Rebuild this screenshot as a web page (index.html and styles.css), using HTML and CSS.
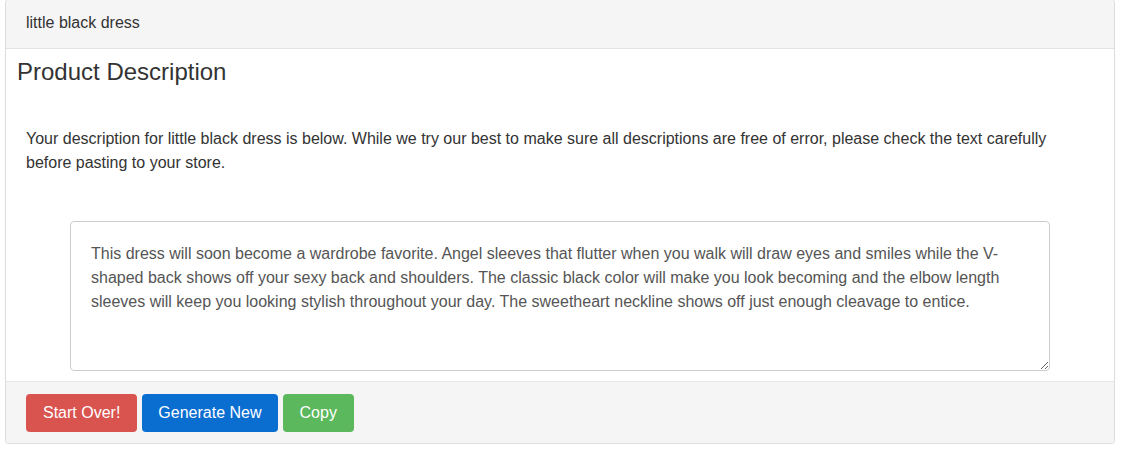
FILE: index.html
```html
<!DOCTYPE html>
<html>
<head>
<meta charset="utf-8">
<link rel="stylesheet" href="styles.css">
</head>
<body>
<div class="panel">
  <div class="panel-heading">little black dress</div>
  <div class="panel-body">
    <h3 class="title">Product Description</h3>
    <p class="intro">Your description for little black dress is below. While we try our best to make sure all descriptions are free of error, please check the text carefully before pasting to your store.</p>
    <textarea class="desc">This dress will soon become a wardrobe favorite. Angel sleeves that flutter when you walk will draw eyes and smiles while the V-shaped back shows off your sexy back and shoulders. The classic black color will make you look becoming and the elbow length sleeves will keep you looking stylish throughout your day. The sweetheart neckline shows off just enough cleavage to entice.</textarea>
  </div>
  <div class="panel-footer">
    <button class="btn btn-red">Start Over!</button>
    <button class="btn btn-blue">Generate New</button>
    <button class="btn btn-green">Copy</button>
  </div>
</div>
</body>
</html>
```

FILE: styles.css
```css
html, body {
  margin: 0;
  padding: 0;
  background: #fff;
}
body {
  font-family: "Liberation Sans", Arial, sans-serif;
  color: #333;
}
.panel {
  margin: -1px 18px 0 5px;
  border: 1px solid #dcdcdc;
  border-radius: 4px;
  background: #fff;
  box-shadow: 0 1px 1px rgba(0,0,0,0.05);
}
.panel-heading {
  height: 49px;
  box-sizing: border-box;
  padding: 14px 20px 0;
  background: #f5f5f5;
  border-bottom: 1px solid #e3e3e3;
  font-size: 16px;
  line-height: 18px;
  color: #333;
  border-radius: 3px 3px 0 0;
}
.panel-body {
  padding: 10px 10px 10px 10px;
  display: flex;
  flex-direction: column;
}
.title {
  margin: 0;
  font-size: 24px;
  font-weight: normal;
  line-height: 26px;
  color: #333;
  padding-left: 1px;
}
.intro {
  margin: 42px 0 0;
  padding: 0 10px;
  max-width: 1030px;
  font-size: 16px;
  line-height: 24px;
  color: #333;
}
.desc {
  margin: 46px auto 0;
  width: 980px;
  height: 150px;
  box-sizing: border-box;
  padding: 20px 20px;
  border: 1px solid #ccc;
  border-radius: 4px;
  font-family: "Liberation Sans", Arial, sans-serif;
  font-size: 16px;
  line-height: 24px;
  color: #555;
  resize: vertical;
  display: block;
}
.panel-footer {
  background: #f5f5f5;
  border-top: 1px solid #e8e8e8;
  padding: 12px 20px 11px;
  display: flex;
  gap: 5px;
  border-radius: 0 0 3px 3px;
}
.btn {
  height: 38px;
  border: none;
  border-radius: 4px;
  padding: 0 17px;
  font-family: "Liberation Sans", Arial, sans-serif;
  font-size: 16px;
  color: #fff;
}
.btn-red { background: #d9534f; }
.btn-blue { background: #0a6ed1; padding: 0 16px; }
.btn-green { background: #5cb85c; padding: 0 17px; }
```
